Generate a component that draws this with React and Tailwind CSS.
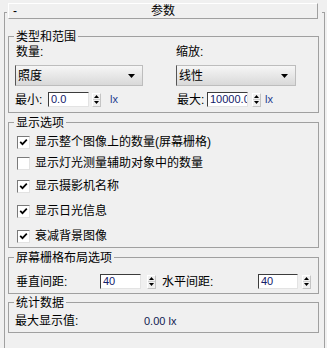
import React from "react";

const FONT = "font-['Liberation_Sans','Noto_Sans_CJK_SC',sans-serif]";

function Spinner() {
  return (
    <div className="w-[9px] h-[14px] flex flex-col bg-[#f0f0f0] border border-[#c4c4c4] border-l-white border-t-white">
      <div className="flex-1 flex items-center justify-center border-b border-[#d0d0d0]">
        <svg width="5" height="3" viewBox="0 0 5 3"><path d="M0 3h5L2.5 0z" fill="#000" /></svg>
      </div>
      <div className="flex-1 flex items-center justify-center">
        <svg width="5" height="3" viewBox="0 0 5 3"><path d="M0 0h5L2.5 3z" fill="#000" /></svg>
      </div>
    </div>
  );
}

function Input({ value, w = "w-[41px]" }) {
  return (
    <div className={`${w} h-[15px] bg-white border border-[#3c3c3c] border-r-[#e3e3e3] border-b-[#e3e3e3] pl-[2px] text-[11px] leading-[13px] text-[#13206a] overflow-hidden whitespace-nowrap`}>
      {value}
    </div>
  );
}

function Dropdown({ value, w }) {
  return (
    <div className={`${w} h-[21px] flex items-center justify-between border border-[#bdbdbd] border-l-[#555555] bg-linear-to-b from-[#f6f6f6] to-[#d9d9d9] pl-[2px] pr-[7px] text-[12px] leading-[14px]`}>
      <span>{value}</span>
      <svg width="7" height="4" viewBox="0 0 7 4"><path d="M0 0h7L3.5 4z" fill="#000" /></svg>
    </div>
  );
}

function Checkbox({ checked }) {
  return (
    <div className="w-[13px] h-[13px] bg-white border border-[#7a7a7a] border-r-[#e2e2e2] border-b-[#e2e2e2] flex items-center justify-center">
      {checked && (
        <svg width="9" height="9" viewBox="0 0 9 9">
          <path d="M1.2 3.8 L3.5 6.2 L7.8 1.6" stroke="#000" strokeWidth="1.7" fill="none" />
        </svg>
      )}
    </div>
  );
}

function Group({ title, className = "", children }) {
  return (
    <div className={`ml-[3px] w-[311px] border border-[#a0a0a0] ${className}`}>
      <div className="-mt-[7px] ml-[5px] w-fit px-[2px] bg-[#f0f0f0] h-[14px] leading-[14px]">{title}</div>
      {children}
    </div>
  );
}

function CheckRow({ checked, label, className }) {
  return (
    <div className={`flex items-center h-[14px] ml-[8px] ${className}`}>
      <Checkbox checked={checked} />
      <span className="ml-[5px] leading-[14px]">{label}</span>
    </div>
  );
}

export default function App() {
  return (
    <div className={`w-[327px] h-[348px] bg-[#f0f0f0] pt-[12px] pl-[4px] overflow-hidden text-[12px] text-black ${FONT}`}>
      <div className="w-[321px] h-[336px] border-l border-r border-[#a0a0a0]">
        <div className="flex justify-between h-[1px]">
          <div className="w-[2px] bg-[#a0a0a0]" />
          <div className="w-[2px] bg-[#a0a0a0]" />
        </div>
        {/* rollout header */}
        <div className="-mt-[10px] ml-[3px] w-[310px] h-[16px] border-t border-l border-white border-r border-b border-r-[#a0a0a0] border-b-[#a0a0a0] bg-[#f0f0f0] relative flex items-center justify-center leading-[14px]">
          <span className="absolute left-[4px] top-0">-</span>
          <span>参数</span>
        </div>

        {/* 类型和范围 */}
        <Group title="类型和范围" className="mt-[17px] pb-[5px]">
          <div className="flex pl-[6px]">
            <div className="w-[161px] flex flex-col">
              <div className="ml-[1px] mt-[1px] h-[14px] leading-[14px]">数量:</div>
              <div className="mt-[6px]"><Dropdown value="照度" w="w-[128px]" /></div>
              <div className="mt-[6px] flex items-center h-[15px]">
                <span className="w-[33px] leading-[14px]">最小:</span>
                <Input value="0.0" />
                <div className="ml-[3px]"><Spinner /></div>
                <span className="ml-[9px] text-[11px] text-[#1d3b8f]">lx</span>
              </div>
            </div>
            <div className="flex flex-col">
              <div className="mt-[1px] h-[14px] leading-[14px]">缩放:</div>
              <div className="mt-[6px]"><Dropdown value="线性" w="w-[120px]" /></div>
              <div className="mt-[6px] flex items-center h-[15px]">
                <span className="ml-[1px] w-[30px] leading-[14px]">最大:</span>
                <Input value="10000.0" />
                <div className="ml-[4px]"><Spinner /></div>
                <span className="ml-[4px] text-[11px] text-[#1d3b8f]">lx</span>
              </div>
            </div>
          </div>
        </Group>

        {/* 显示选项 */}
        <Group title="显示选项" className="mt-[9px] pb-[4px]">
          <CheckRow checked label="显示整个图像上的数量(屏幕栅格)" className="mt-[5px]" />
          <CheckRow checked={false} label="显示灯光测量辅助对象中的数量" className="mt-[7px]" />
          <CheckRow checked label="显示摄影机名称" className="mt-[9px]" />
          <CheckRow checked label="显示日光信息" className="mt-[11px]" />
          <CheckRow checked label="衰减背景图像" className="mt-[11px]" />
        </Group>

        {/* 屏幕栅格布局选项 */}
        <Group title="屏幕栅格布局选项" className="mt-[9px] pb-[4px]">
          <div className="mt-[9px] flex items-center h-[15px] pl-[7px]">
            <span className="w-[84px] leading-[14px]">垂直间距:</span>
            <Input value="40" />
            <div className="ml-[6px]"><Spinner /></div>
            <span className="ml-[6px] w-[96px] leading-[14px]">水平间距:</span>
            <Input value="40" w="w-[40px]" />
            <div className="ml-[4px]"><Spinner /></div>
          </div>
        </Group>

        {/* 统计数据 */}
        <Group title="统计数据" className="mt-[8px] pb-[4px]">
          <div className="mt-[4px] flex items-center h-[14px] pl-[6px]">
            <span className="w-[129px] leading-[14px]">最大显示值:</span>
            <span className="text-[11px] text-[#101a50]">0.00 lx</span>
          </div>
        </Group>
      </div>
    </div>
  );
}
